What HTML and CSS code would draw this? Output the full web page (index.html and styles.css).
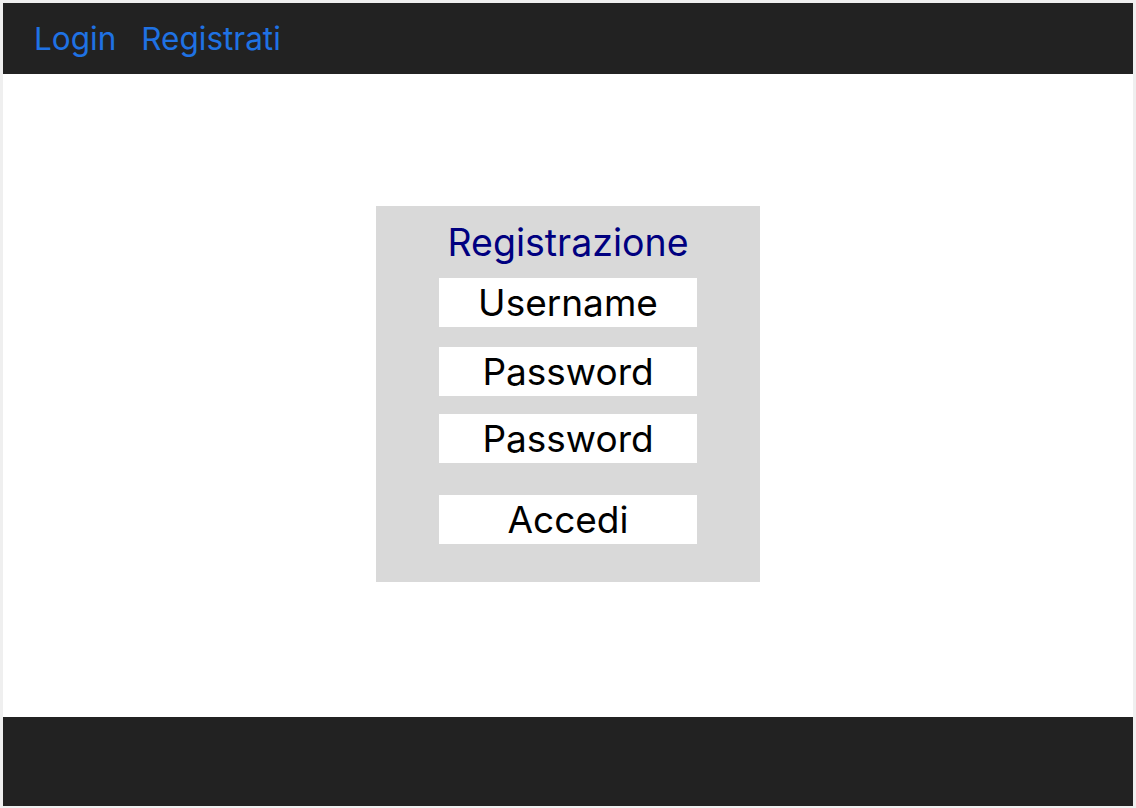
FILE: index.html
```html
<!DOCTYPE html>
<html lang="it">
<head>
<meta charset="utf-8">
<title>Registrazione</title>
<link rel="stylesheet" href="styles.css">
</head>
<body>
<div class="frame">
  <header class="topbar">
    <nav class="nav">
      <a class="nav-link" href="#">Login</a>
      <a class="nav-link" href="#">Registrati</a>
    </nav>
  </header>
  <main class="content">
    <section class="card">
      <h1 class="card-title">Registrazione</h1>
      <div class="field f1">Username</div>
      <div class="field f2">Password</div>
      <div class="field f3">Password</div>
      <div class="field btn">Accedi</div>
    </section>
  </main>
  <footer class="footer"></footer>
</div>
</body>
</html>
```
FILE: styles.css
```css
html, body {
  margin: 0;
  padding: 0;
}
body {
  background: #efefef;
  font-family: Inter, "Noto Sans", sans-serif;
}
.frame {
  margin: 3px 3px 2px 3px;
  height: 803px;
  background: #ffffff;
  display: flex;
  flex-direction: column;
}
.topbar {
  height: 71px;
  background: #222222;
  display: flex;
  align-items: center;
}
.nav {
  display: flex;
  gap: 25px;
  padding-left: 31px;
}
.nav-link {
  color: #1f72e4;
  text-decoration: none;
  font-size: 31.5px;
  line-height: 38px;
}
.content {
  flex: 1;
  display: flex;
  align-items: center;
  justify-content: center;
}
.card {
  width: 384px;
  height: 376px;
  margin-bottom: 4px;
  background: #d9d9d9;
  display: flex;
  flex-direction: column;
  align-items: center;
  box-sizing: border-box;
  padding-top: 14px;
}
.card-title {
  margin: 0 0 12px 0;
  font-weight: 400;
  font-size: 37.5px;
  line-height: 46px;
  color: #000080;
}
.field {
  width: 258px;
  height: 49px;
  background: #ffffff;
  color: #000000;
  font-size: 37px;
  line-height: 49px;
  text-align: center;
}
.f2 { margin-top: 20px; }
.f3 { margin-top: 18px; }
.btn { margin-top: 32px; }
.footer {
  height: 89px;
  background: #222222;
}
```
